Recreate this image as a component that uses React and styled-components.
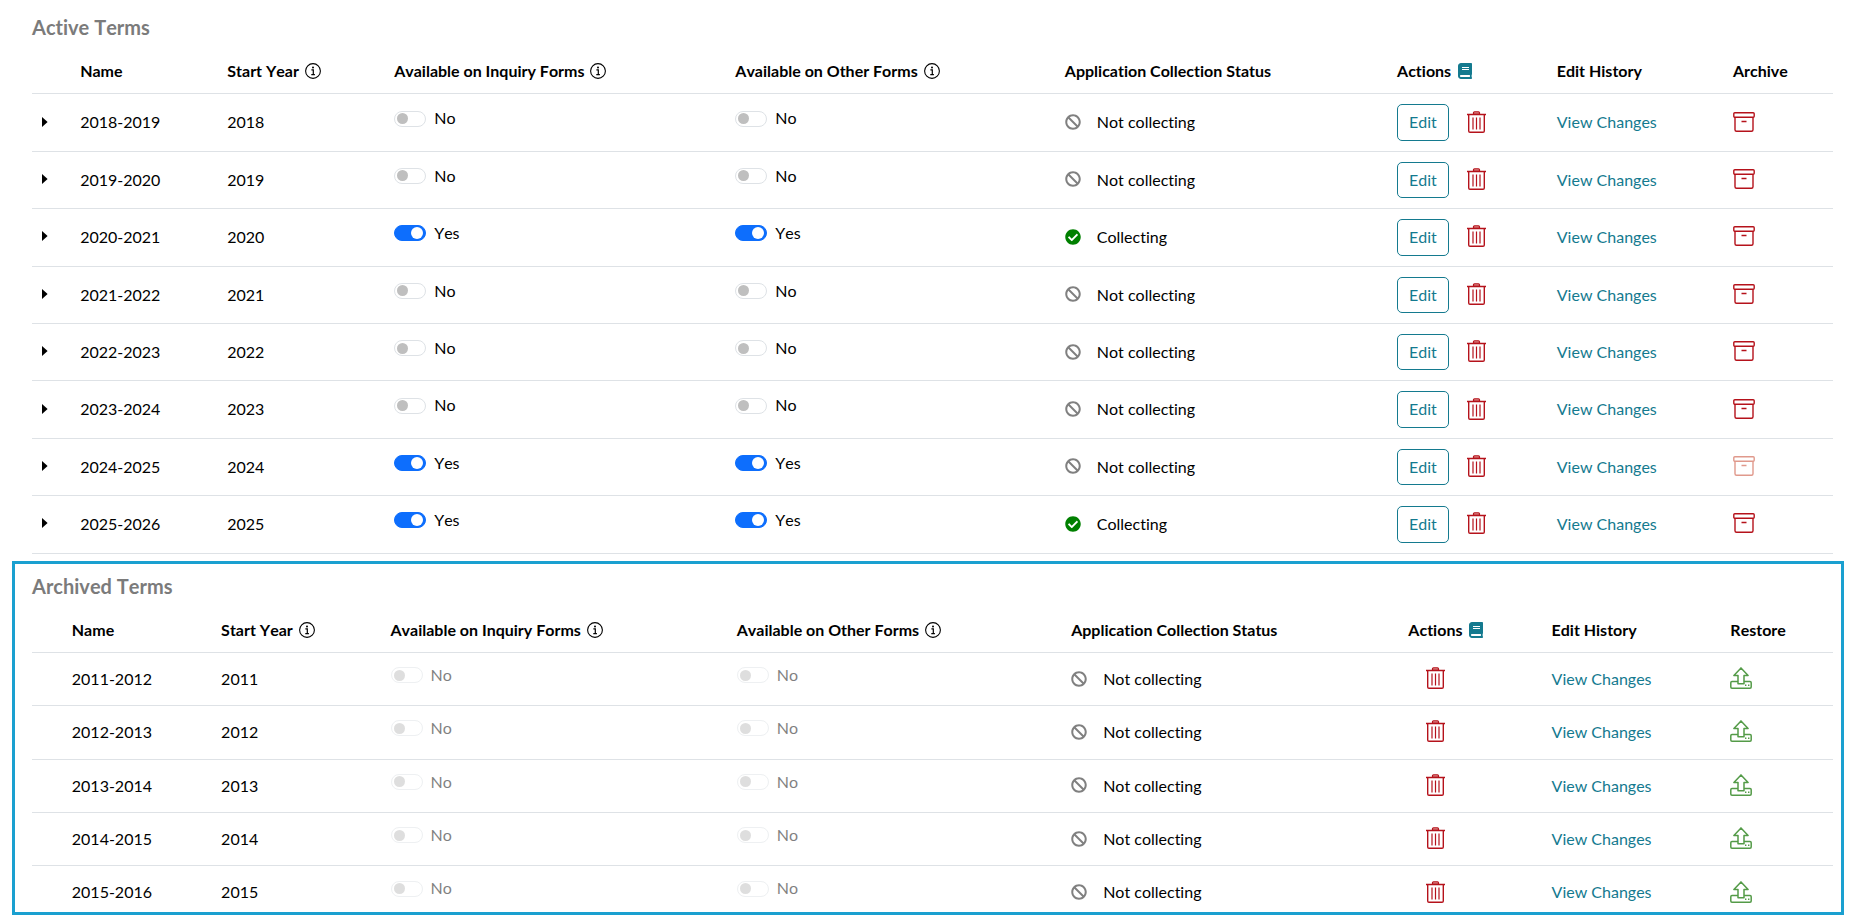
import React, {useState} from 'react';
import styled, {createGlobalStyle} from 'styled-components';
import {FaBan, FaBook, FaCheckCircle} from 'react-icons/fa';

const GlobalStyle = createGlobalStyle`
	*, *::before, *::after {
		box-sizing: border-box;
	}
	body {
		margin: 0;
		background: #fff;
		color: #000;
		font-family: Lato, "Liberation Sans", sans-serif;
		font-size: 16px;
		line-height: 1.4;
		font-kerning: none;
		font-variant-ligatures: none;
	}
`;

const Page = styled.main`
	padding: 13px 10px 0 12px;
`;

const Section = styled.section`
	padding: 0 11px 0 20px;
	margin-bottom: 7px;
`;

const ArchivedSection = styled.section`
	padding: 8px 8px 0 17px;
	border: 3px solid #1aa0d0;
	overflow: hidden;
`;

const Heading = styled.h2`
	margin: 0 0 9px;
	color: #7b7b7b;
	font-size: 20px;
	font-weight: 700;
`;

const Table = styled.table`
	width: 100%;
	margin-bottom: ${p => (p.$tight ? '-8px' : '0')};
	border-collapse: separate;
	border-spacing: 0;
`;

const Th = styled.th`
	padding: 10px 10px 11px;
	border-bottom: 1px solid #dee2e6;
	font-weight: 700;
	text-align: left;
	white-space: nowrap;

	svg {
		margin-left: 6px;
		vertical-align: -2px;
	}
`;

const Td = styled.td`
	padding: 10px;
	border-bottom: 1px solid #dee2e6;
	vertical-align: middle;
	white-space: nowrap;
`;

const HelpLink = styled.a`
	color: #147a8f;
`;

const IconButton = styled.button`
	display: flex;
	padding: 0 0 2px;
	border: 0;
	background: none;
	color: #b5121b;
	cursor: pointer;

	&:disabled {
		color: #e0998c;
		cursor: default;
	}
`;

const EditButton = styled.button`
	padding: 6px 11px;
	border: 1px solid #147a8f;
	border-radius: 5px;
	background: #fff;
	color: #147a8f;
	font: inherit;
	cursor: pointer;
`;

const Actions = styled.div`
	display: flex;
	align-items: center;
	gap: 18px;
`;

const ArchivedActions = styled.div`
	display: flex;
	padding-left: 18px;
`;

const Link = styled.a`
	color: #147a8f;
	text-decoration: none;
`;

const SwitchLabel = styled.label`
	display: flex;
	align-items: center;
	gap: 8px;
	margin: 1px 0 9px;
	opacity: ${p => (p.$disabled ? 0.5 : 1)};
`;

const SwitchInput = styled.input`
	appearance: none;
	display: flex;
	align-items: center;
	width: 32px;
	height: 16px;
	margin: 0;
	padding: 0 2px;
	border: 1px solid #dee2e6;
	border-radius: 8px;
	background: #fff;

	&::before {
		content: '';
		width: 11px;
		height: 11px;
		border-radius: 50%;
		background: #bfbfbf;
	}
	&:checked {
		justify-content: flex-end;
		border-color: #0d6efd;
		background: #0d6efd;
	}
	&:checked::before {
		width: 12px;
		height: 12px;
		background: #fff;
	}
`;

const Status = styled.span`
	display: flex;
	align-items: center;
	gap: 16px;

	svg {
		margin-bottom: 1px;
	}
`;

const CaretIcon = () => (
	<svg width="6" height="12" viewBox="0 0 6 12" aria-hidden="true">
		<path d="M0 1v10l5.6-5z" fill="#000"/>
	</svg>
);

const InfoIcon = () => (
	<svg width="16" height="16" viewBox="0 0 16 16" aria-hidden="true">
		<circle cx="8" cy="8" r="7.4" fill="none" stroke="#000" strokeWidth="1.1"/>
		<circle cx="8" cy="4.4" r="1" fill="#000"/>
		<path d="M6.4 6.9h1.9v4.6M6.3 11.6h3.6" fill="none" stroke="#000" strokeWidth="1.2"/>
	</svg>
);

const TrashIcon = () => (
	<svg width="19" height="22" viewBox="0 0 19 22" fill="none" stroke="currentColor" aria-hidden="true">
		<path d="M6.5 1.8q0-1 1-1h4q1 0 1 1V3h-6z" fill="#e9b8b4" strokeWidth="1.2"/>
		<path d="M0 3.5h19M1.7 4v16q0 1.3 1.3 1.3h13q1.3 0 1.3-1.3V4" strokeWidth="1.4"/>
		<path d="M6 6.5v12M9.5 6.5v12M13 6.5v12" strokeWidth="1.2"/>
	</svg>
);

const ArchiveIcon = () => (
	<svg width="22" height="20" viewBox="0 0 22 20" fill="none" stroke="currentColor" strokeWidth="1.4" aria-hidden="true">
		<rect x=".8" y=".8" width="20.4" height="4.4" rx="1"/>
		<path d="M2 5.3v12.4q0 1.5 1.5 1.5h15q1.5 0 1.5-1.5V5.3M8.5 9.5h5"/>
	</svg>
);

const RestoreIcon = () => (
	<svg width="22" height="22" viewBox="0 0 22 22" fill="none" stroke="#549b48" strokeWidth="1.5" strokeLinejoin="round" aria-hidden="true">
		<path d="M8 14.5H2q-1.2 0-1.2 1.3V20q0 1.2 1.2 1.2h18q1.2 0 1.2-1.2v-4.2q0-1.3-1.2-1.3h-6"/>
		<path d="M11 .9 3.9 8.5H8v8.3h6V8.5h4.1z"/>
		<path d="M15 18.2h1.4M18 18.2h1.4"/>
	</svg>
);

const Switch = ({on, disabled}) => {
	const [checked, setChecked] = useState(on);
	return (
		<SwitchLabel $disabled={disabled}>
			<SwitchInput
				type="checkbox"
				role="switch"
				checked={checked}
				disabled={disabled}
				onChange={e => setChecked(e.target.checked)}
			/>
			{checked ? 'Yes' : 'No'}
		</SwitchLabel>
	);
};

const CollectionStatus = ({collecting}) => (
	<Status>
		{collecting ? <FaCheckCircle color="#008000"/> : <FaBan color="#808080"/>}
		{collecting ? 'Collecting' : 'Not collecting'}
	</Status>
);

const TermsHead = ({last}) => (
	<thead>
		<tr>
			<Th/>
			<Th>Name</Th>
			<Th>Start Year<InfoIcon/></Th>
			<Th>Available on Inquiry Forms<InfoIcon/></Th>
			<Th>Available on Other Forms<InfoIcon/></Th>
			<Th>Application Collection Status</Th>
			<Th>Actions<HelpLink href="#help" aria-label="Help"><FaBook/></HelpLink></Th>
			<Th>Edit History</Th>
			<Th>{last}</Th>
		</tr>
	</thead>
);

const activeTerms = [
	{year: 2018},
	{year: 2019},
	{year: 2020, available: true, collecting: true},
	{year: 2021},
	{year: 2022},
	{year: 2023},
	{year: 2024, available: true, current: true},
	{year: 2025, available: true, collecting: true}
];

const archivedTerms = [2011, 2012, 2013, 2014, 2015];

const ActiveRow = ({term}) => (
	<tr>
		<Td><IconButton aria-label="Expand"><CaretIcon/></IconButton></Td>
		<Td>{`${term.year}-${term.year + 1}`}</Td>
		<Td>{term.year}</Td>
		<Td><Switch on={Boolean(term.available)}/></Td>
		<Td><Switch on={Boolean(term.available)}/></Td>
		<Td><CollectionStatus collecting={term.collecting}/></Td>
		<Td>
			<Actions>
				<EditButton>Edit</EditButton>
				<IconButton aria-label="Delete"><TrashIcon/></IconButton>
			</Actions>
		</Td>
		<Td><Link href="#changes">View Changes</Link></Td>
		<Td><IconButton aria-label="Archive" disabled={term.current}><ArchiveIcon/></IconButton></Td>
	</tr>
);

const ArchivedRow = ({year}) => (
	<tr>
		<Td/>
		<Td>{`${year}-${year + 1}`}</Td>
		<Td>{year}</Td>
		<Td><Switch on={false} disabled/></Td>
		<Td><Switch on={false} disabled/></Td>
		<Td><CollectionStatus/></Td>
		<Td>
			<ArchivedActions>
				<IconButton aria-label="Delete"><TrashIcon/></IconButton>
			</ArchivedActions>
		</Td>
		<Td><Link href="#changes">View Changes</Link></Td>
		<Td><IconButton aria-label="Restore"><RestoreIcon/></IconButton></Td>
	</tr>
);

const App = () => (
	<>
		<GlobalStyle/>
		<Page>
			<Section>
				<Heading>Active Terms</Heading>
				<Table>
					<TermsHead last="Archive"/>
					<tbody>
						{activeTerms.map(term => <ActiveRow key={term.year} term={term}/>)}
					</tbody>
				</Table>
			</Section>
			<ArchivedSection>
				<Heading>Archived Terms</Heading>
				<Table $tight>
					<TermsHead last="Restore"/>
					<tbody>
						{archivedTerms.map(year => <ArchivedRow key={year} year={year}/>)}
					</tbody>
				</Table>
			</ArchivedSection>
		</Page>
	</>
);

export default App;
